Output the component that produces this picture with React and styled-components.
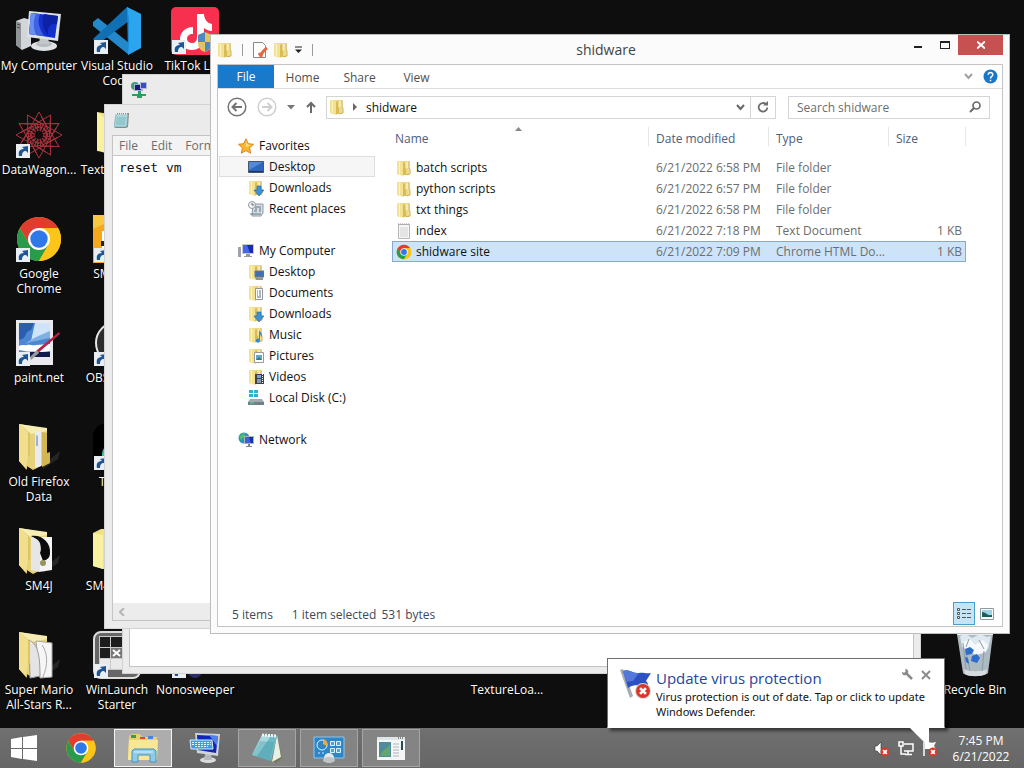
import React from 'react';
import styled, { createGlobalStyle } from 'styled-components';

const GlobalStyle = createGlobalStyle`
  * {
    box-sizing: border-box;
  }

  body {
    margin: 0;
    background: #0e0e0e;
    overflow: hidden;
  }

  body, button, input, textarea, table {
    font-family: "Open Sans", "Noto Sans", sans-serif;
    font-size: 12px;
    line-height: 15px;
  }

  button {
    border: 0;
    padding: 0;
    background: none;
    color: inherit;
  }

  svg {
    display: block;
    flex: none;
  }
`;

// Desktop
const Screen = styled.div`
  display: flex;
  flex-direction: column;
  height: 100vh;
  overflow: hidden;
`;

const Desktop = styled.main`
  position: relative;
  flex: 1;
  min-height: 0;
  background: #0e0e0e;
`;

const IconGrid = styled.div`
  display: grid;
  grid-auto-columns: 78px;
  grid-auto-rows: 104px;
`;

const Shortcut = styled.button`
  grid-column: ${(p) => p.$col};
  grid-row: ${(p) => p.$row};
  display: flex;
  flex-direction: column;
  align-items: center;
  gap: 3px;
  padding-top: 7px;
  color: #fff;
  font-size: 12px;
  text-shadow: 1px 1px 2px #000;

  svg {
    height: 48px;
  }

  span {
    width: 100%;
    white-space: pre;
    text-align: center;
  }
`;

// Windows
const WindowFrame = styled.section`
  position: absolute;
  display: flex;
  flex-direction: column;
  padding: 0 7px 7px;
  background: #ebebeb;
  border: 1px solid #d2d2d2;
`;

const SystemWindow = styled(WindowFrame)`
  top: 74px;
  left: 122px;
  right: 103px;
  bottom: 54px;
  padding: 0 6px 6px;
`;

const NotepadWindow = styled(WindowFrame)`
  top: 104px;
  left: 104px;
  right: 240px;
  bottom: 99px;
`;

const ExplorerWindow = styled(WindowFrame)`
  top: 34px;
  left: 210px;
  right: 14px;
  bottom: 94px;
  background: #fbfbfb;
  border-color: #bdbdbd;
  padding: 0 6px 6px;
`;

const PlainTitle = styled.header`
  display: flex;
  align-items: center;
  height: 30px;
  padding-left: 2px;
`;

const WindowBody = styled.div`
  display: flex;
  flex-direction: column;
  flex: 1;
  min-height: 0;
  background: #fff;
  border: 1px solid #c4c4c4;
`;

const MenuBar = styled.div`
  display: flex;
  align-items: center;
  height: 20px;
  padding-left: 6px;
  gap: 13px;
  background: #f3f3f3;
  border-bottom: 1px solid #c9c9c9;
  color: #6d6d6d;
`;

const Editor = styled.textarea`
  flex: 1;
  border: 0;
  outline: 0;
  resize: none;
  padding: 4px 6px;
  color: #111;
  font-family: "DejaVu Sans Mono", monospace;
  font-size: 13px;
  line-height: 16px;
`;

const HorizontalScroll = styled.div`
  display: flex;
  align-items: center;
  height: 17px;
  padding-left: 6px;
  background: #ececec;
`;

// Explorer title and ribbon
const TitleBar = styled.header`
  display: grid;
  grid-template-columns: 1fr auto 1fr;
  height: 29px;
  color: #444;
`;

const QuickAccess = styled.div`
  display: flex;
  align-items: center;
  gap: 5px;
`;

const Separator = styled.i`
  width: 1px;
  height: 12px;
  margin: 0 4px;
  background: #9a9a9a;
`;

const WindowTitle = styled.h1`
  margin: 0;
  padding-right: 8px;
  font-size: 14px;
  font-weight: 400;
  line-height: 30px;
`;

const Captions = styled.div`
  display: flex;
  justify-content: flex-end;
`;

const CaptionButton = styled.button`
  display: flex;
  align-items: center;
  justify-content: center;
  width: ${(p) => (p.$close ? '45px' : '27px')};
  height: 20px;
  background: ${(p) => (p.$close ? '#c75050' : 'transparent')};
`;

const Ribbon = styled.nav`
  display: flex;
  align-items: center;
  height: 24px;
  border-bottom: 1px solid #dcddde;
  color: #4f4f4f;
`;

const FileTab = styled.button`
  align-self: stretch;
  width: 56px;
  background: #1979ca;
  color: #fff;
`;

const RibbonTab = styled.button`
  width: 57px;
  height: 23px;
  padding-top: 2px;
`;

const RibbonEnd = styled.div`
  display: flex;
  align-items: center;
  gap: 10px;
  margin-left: auto;
  padding-right: 4px;
`;

// Address row
const AddressRow = styled.div`
  display: flex;
  align-items: center;
  height: 35px;
  padding: 1px 12px 0 9px;
`;

const HistoryButtons = styled.div`
  display: flex;
  align-items: center;
  gap: 10px;
  width: 99px;
`;

const AddressBox = styled.div`
  display: flex;
  align-items: center;
  flex: 1;
  height: 23px;
  border: 1px solid #d5d5d5;
  padding-left: 2px;
  color: #111;
`;

const Crumb = styled.button`
  padding: 0 7px;
`;

const AddressButton = styled.button`
  display: flex;
  align-items: center;
  justify-content: center;
  width: ${(p) => (p.$wide ? '25px' : '20px')};
  height: 21px;
  margin-left: ${(p) => (p.$wide ? '0' : 'auto')};
  border-left: ${(p) => (p.$wide ? '1px solid #d5d5d5' : '0')};
`;

const SearchBox = styled.label`
  display: flex;
  align-items: center;
  width: 202px;
  height: 23px;
  margin-left: 12px;
  padding: 0 8px;
  border: 1px solid #d5d5d5;

  input {
    flex: 1;
    min-width: 0;
    border: 0;
    outline: 0;
    padding: 0;
    background: none;
  }

  input::placeholder {
    color: #6d6d6d;
    opacity: 1;
  }
`;

// Tree and file list
const Panes = styled.div`
  display: flex;
  flex: 1;
  min-height: 0;
`;

const Tree = styled.nav`
  width: 157px;
  padding: 11px 0 0 1px;
`;

const TreeGroup = styled.ul`
  list-style: none;
  margin: 0 0 21px;
  padding: 0;
`;

const TreeItem = styled.button`
  display: flex;
  align-items: center;
  gap: 5px;
  width: 100%;
  height: 21px;
  padding-left: ${(p) => (p.$top ? '18px' : '28px')};
  color: #111;
  white-space: nowrap;
  border: 1px solid ${(p) => (p.$active ? '#dedede' : 'transparent')};
  background: ${(p) => (p.$active ? '#f6f6f6' : 'transparent')};
`;

const FilePane = styled.div`
  flex: 1;
  padding: 3px 36px 0 17px;
`;

const FileTable = styled.table`
  width: 100%;
  table-layout: fixed;
  border-collapse: collapse;
  color: #6d6d6d;

  th {
    height: 30px;
    padding: 0;
    text-align: left;
    vertical-align: top;
    font-weight: 400;
    color: #4c607a;
  }

  td {
    height: 21px;
    padding: 0 4px 0 7px;
    white-space: nowrap;
  }

  td:first-child {
    padding-left: 4px;
    color: #111;
  }

  td:last-child {
    text-align: right;
  }
`;

const HeaderCell = styled.div`
  position: relative;
  height: 19px;
  padding: ${(p) => (p.$first ? '4px 0 0 3px' : '4px 0 0 7px')};
  border-right: 1px solid #e6e6e6;

  svg {
    position: absolute;
    top: 0;
    left: 48%;
  }
`;

const FileRow = styled.tr`
  background: ${(p) => (p.$selected ? '#cde4f8' : 'transparent')};
  outline: ${(p) => (p.$selected ? '1px solid #86aacd' : '0')};
  outline-offset: -1px;
`;

const FileName = styled.div`
  display: flex;
  align-items: center;
  gap: 4px;
`;

const StatusBar = styled.footer`
  display: flex;
  align-items: center;
  height: 25px;
  padding: 0 8px 0 14px;
  gap: 5px;
  color: #3d4a5c;

  span {
    padding-top: 2px;
  }

  span:first-child {
    margin-right: 14px;
  }
`;

const ViewButton = styled.button`
  display: flex;
  align-items: center;
  justify-content: center;
  width: ${(p) => (p.$on ? '22px' : '14px')};
  height: 23px;
  margin-left: ${(p) => (p.$on ? 'auto' : '0')};
  background: ${(p) => (p.$on ? '#c3e5f5' : 'transparent')};
  border: ${(p) => (p.$on ? '1px solid #4aa0c8' : '0')};
`;

// Notification balloon
const Balloon = styled.aside`
  position: absolute;
  right: 79px;
  bottom: 0;
  z-index: 2;
  display: flex;
  gap: 4px;
  width: 338px;
  padding: 9px 10px 8px 12px;
  background: #fff;
  border: 1px solid #6f6f6f;
  border-bottom-color: #fff;
  box-shadow: 3px 3px 3px rgba(0, 0, 0, 0.5);

  &::after {
    content: '';
    position: absolute;
    top: 100%;
    right: 15px;
    width: 20px;
    height: 20px;
    background: #fff;
    clip-path: polygon(0 0, 100% 0, 100% 100%);
  }
`;

const BalloonText = styled.div`
  flex: 1;
  color: #111;

  h2 {
    margin: 0;
    color: #24459c;
    font-size: 15px;
    font-weight: 400;
    line-height: 21px;
  }

  p {
    margin: 0;
    font-family: "Noto Sans", "Open Sans", sans-serif;
    font-size: 11px;
    white-space: nowrap;
  }
`;

const BalloonTools = styled.div`
  position: absolute;
  top: 10px;
  right: 13px;
  display: flex;
  gap: 8px;
`;

// Taskbar
const TaskBar = styled.footer`
  display: flex;
  align-items: center;
  height: 40px;
  gap: 4px;
  background: linear-gradient(#707070, #666);
  color: #fff;
`;

const StartButton = styled.button`
  display: flex;
  align-items: center;
  justify-content: center;
  width: 48px;
  height: 40px;
`;

const Task = styled.button`
  display: flex;
  align-items: center;
  justify-content: center;
  width: 58px;
  height: 38px;
  border: 1px solid
    ${(p) => (p.$active ? '#f4f4f4' : p.$open ? '#a5a5a5' : 'transparent')};
  background: ${(p) => (p.$active ? '#adadad' : p.$open ? '#848484' : 'transparent')};
`;

const Tray = styled.div`
  display: flex;
  align-items: center;
  gap: 8px;
  margin-left: auto;
  padding-top: 2px;
`;

const Clock = styled.time`
  width: 70px;
  margin-right: 8px;
  text-align: center;
  line-height: 16px;
  white-space: pre;
`;

/* ---------- drawings ---------- */

const ChromeLogo = ({ size = 48 }) => (
  <svg width={size} height={size} viewBox="0 0 48 48">
    <circle cx="24" cy="24" r="22" fill="#fdc41a" />
    <path d="M24 13H43.05A22 22 0 0 0 4.95 13L14.47 29.5Z" fill="#e23c2f" />
    <path d="M14.47 29.5L4.95 13A22 22 0 0 0 24 46L33.53 29.5Z" fill="#2a9a4b" />
    <path d="M24 13H43.05A22 22 0 0 1 24 46L33.53 29.5Z" fill="#fdc41a" />
    <circle cx="24" cy="24" r="11" fill="#fff" />
    <circle cx="24" cy="24" r="8.7" fill="#2f78ea" />
  </svg>
);

const Badge = () => (
  <g>
    <path d="M1 33h14v14H1z" fill="#e9eef4" />
    <path d="M4 45c-1-5 1-7 5-7l-2-2 6-1v7l-2-2c-3 0-4 2-4 5z" fill="#1d5596" />
  </g>
);

const Big = ({ children, shortcut }) => (
  <svg width="48" height="48" viewBox="0 0 48 48">
    {children}
    {shortcut && <Badge />}
  </svg>
);

const BigComputer = () => (
  <Big>
    <path d="M1 14l8-3 7 2v26l-9 4-6-5z" fill="#d3d6d8" />
    <path d="M1 14l5 2v26l-5-4z" fill="#8f9597" />
    <path d="M2 17l3 1M2 20l3 1" stroke="#444" />
    <ellipse cx="29" cy="39" rx="13" ry="5" fill="#dfe3e5" />
    <ellipse cx="29" cy="37" rx="8" ry="3" fill="#b5bcc0" />
    <path d="M25 29h8l1 8h-10z" fill="#c1c7ca" />
    <path d="M14 4l32 3-3 27-31-4z" fill="#dfe2e3" />
    <path d="M16 6l27 3-3 22-26-4z" fill="#1130cc" />
    <path d="M16 6l9 1c-3 7-1 14 4 22l-15-2z" fill="#3f62e4" />
    <path d="M16 6l5 1c-3 7-3 13 0 21l-7-1z" fill="#6b8ff0" />
    <path d="M29 7l14 2-1 8c-6-1-10 2-9 12-5-7-7-15-4-22z" fill="#0c21a3" />
  </Big>
);

const VsCode = () => (
  <Big shortcut>
    <path d="M0 15l5-4 31 25v12L0 19z" fill="#2489ca" />
    <path d="M5 37L0 32 34 0l14 7-12 7z" fill="#1070b3" />
    <path d="M34 0l14 7v34l-13 7V13z" fill="#2aa5ee" />
    <path d="M34 0l1 48 1-12V13z" fill="#1b8ad8" />
  </Big>
);

const TikTok = () => (
  <Big shortcut>
    <rect width="48" height="48" rx="5" fill="#f8304f" />
    <path
      d="M33 7v23c0 9-6 13-12 13-7 0-12-5-12-11s5-12 13-12v7c-4 0-6 2-6 5 0 2 2 4 5 4 3 0 5-2 5-6V7zM33 8c1 5 3 8 8 9v7c-4 0-7-2-9-4z"
      fill="#fff"
    />
    <path d="M27 28l7-3 7 3v8c0 5-4 8-7 9-4-1-7-4-7-9z" fill="#e7c35b" />
    <path d="M34 25v10h-7v-7zM34 35h7c0 5-3 8-7 10z" fill="#4f89c4" />
  </Big>
);

const DataWagon = () => (
  <Big shortcut>
    <g fill="none" stroke="#a8323c">
      {[0, 30, 60, 90, 120, 150, 180, 210, 240, 270, 300, 330].map((a) => (
        <g key={a} transform={`rotate(${a} 24 24)`}>
          <path d="M24 1L15 17l9 6 9-6zM17 7l14 9" />
        </g>
      ))}
      <circle cx="24" cy="24" r="8" strokeDasharray="2 1" strokeWidth="2" />
    </g>
    <circle cx="24" cy="24" r="4" fill="#0e0e0e" />
  </Big>
);

const PaintNet = () => (
  <Big shortcut>
    <path d="M1 1h37v45H1z" fill="#e9e9ef" />
    <path d="M4 4h31v34H4z" fill="#4d87d2" />
    <path d="M20 4h15v12c-9 1-14 4-19 6z" fill="#cfe4f9" />
    <path d="M4 4h15l-3 7-4 2-3 6-5 2z" fill="#2a5cb0" />
    <path d="M35 12v7c-9 2-18 3-25 6 6-5 13-8 25-13z" fill="#7fb0e4" />
    <path d="M4 27c3-2 6 0 8-1s6 1 9 0l14-1v7l-15 2-16-3z" fill="#fff" />
    <path d="M4 34c10-2 20-1 31-1v5H4z" fill="#101c4d" />
    <path d="M44 13L22 31l-3 5 4-2 22-19z" fill="#b32446" />
    <path d="M22 31l2 3-8 7-1-3z" fill="#9a9a9a" />
  </Big>
);

const BigFolder = ({ kind }) => (
  <Big>
    <path d="M28 42l17-14-2 8-15 10z" fill="#252525" />
    <path d="M4 1l28 5v34l-14 7L4 38z" fill="#e5d37c" />
    <path d="M4 1l28 4v3l-16 3z" fill="#f6edb4" />
    {kind === 'plain' && (
      <>
        <path d="M20 8l6 1v34l-6 2z" fill="#e9ebf3" />
        <path d="M21 12l2 1v10h-2z" fill="#9fb0dc" />
        <path d="M27 9l5 1v20l3-1v11l-8 4z" fill="#d2b652" />
      </>
    )}
    {kind === 'penguin' && (
      <>
        <path d="M20 10h17v33l-13 2z" fill="#f4f4f4" />
        <path d="M16 9c10-2 20 6 19 17 0 5-3 7-7 8l-3-8c3-6-3-14-9-17z" fill="#0b0b0b" />
        <circle cx="28" cy="36" r="3" fill="#989460" />
        <path d="M16 10c8 1 11 7 9 14v21l-9-2z" fill="#e6e6e6" />
      </>
    )}
    {kind === 'papers' && (
      <>
        <path d="M21 10l16 2v34l-12 1z" fill="#f6f6f6" stroke="#a9a9a9" />
        <path d="M27 14c6 8 6 20 1 32" stroke="#aaa" fill="none" />
        <path d="M14 9c8 4 11 12 11 36l-10 2z" fill="#e4e4e4" stroke="#999" />
      </>
    )}
    <path d="M4 1l11 9v23l-3 1v13L4 38z" fill="#ddc565" />
    <path d="M4 1l9 8v24l-2 13-7-8z" fill="#f1df8e" />
  </Big>
);

const YellowBox = ({ round }) => (
  <Big>
    <path d={round ? 'M0 6l8-4h36v38l-34 2L0 39z' : 'M4 1l30 5v38L4 40z'} fill="#eee37c" />
    <path d={round ? 'M0 6l10 2v34L0 39z' : 'M4 1l8 6v35l-8-3z'} fill="#f7f1a0" />
  </Big>
);

const OrangeApp = () => (
  <Big shortcut>
    <path d="M0 0h48v48H0z" fill="#f6a81c" />
    <path d="M0 0h30L0 14z" fill="#f9c843" />
    <path d="M9 16h30v30H9z" fill="#fff" />
    <path d="M8 26h3v5H8z" fill="#222" />
  </Big>
);

const Obs = () => (
  <Big shortcut>
    <circle cx="24" cy="24" r="21" fill="#2d2d30" stroke="#e6e6e6" strokeWidth="2" />
  </Big>
);

const BlackApp = () => (
  <Big shortcut>
    <rect width="48" height="48" rx="14" fill="#000" />
    <path d="M9 32c0-6 3-9 8-10v14H9z" fill="#36c9a8" />
  </Big>
);

const WinLaunch = () => (
  <Big shortcut>
    <rect x="1" y="1" width="46" height="46" rx="7" fill="#666" stroke="#ddd" strokeWidth="2" />
    <rect x="6" y="5" width="36" height="34" fill="#c9c9c9" />
    <path d="M7 6h10v10H7zM18 6h11v10H18zM30 6h11v10H30zM7 17h10v10H7zM30 17h11v10H30z" fill="#1d1d1d" />
    <path d="M7 28h10v10H7zM18 28h11v10H18zM30 28h11v10H30z" fill="#e9e9e9" />
    <path d="M18 17h11v10H18z" fill="#777" />
    <path d="M20 19l7 6m0-6l-7 6" stroke="#fff" strokeWidth="2" />
  </Big>
);

const Nonosweeper = () => (
  <Big shortcut>
    <circle cx="24" cy="40" r="7" fill="#2b2d6b" />
  </Big>
);

const RecycleBin = () => (
  <Big>
    <path d="M6 3h36l-5 39c-4 4-22 4-25 0z" fill="#aebac2" />
    <path d="M9 5l6-2 6 4 8-4 7 3 4-1-3 13-6 4-12-2-8-4z" fill="#dfe8ee" />
    <path d="M11 12l8-4 5 6 8-5 5 5-2 7-9 3-11-4z" fill="#f5f9fb" />
    <path d="M15 21l4 19M33 20l-2 21M12 12l3 27M28 9l5 9M18 8l-3 8" stroke="#8b9ba6" />
    <path d="M14 18l5-2 4 3-2 4-6 1zM21 25l5-2 3 4-3 5-6-2zM14 26l3 1 1 6-3-2z" fill="#2f6dcb" />
    <path d="M13 38c5 3 19 3 23 0l-1 5c-5 3-17 3-21 0z" fill="#d5dce0" />
    <path d="M6 3h36" stroke="#e6ecf0" strokeWidth="2" />
  </Big>
);

const Small = ({ children }) => (
  <svg width="16" height="16" viewBox="0 0 16 16">
    {children}
  </svg>
);

const FolderShape = () => (
  <>
    <path d="M1 1.500l5-.5h7.500v13L6 15.500 1 14z" fill="#ecd98a" />
    <path d="M1 1.500h5l1 2v12L1 14z" fill="#f3e292" />
    <path d="M3.500 2v12.500" stroke="#fbf3bf" />
    <path d="M7 3l2-1v6l1 1v5.500L7 15.500z" fill="#d9bb55" />
    <path d="M10 2h3v6h-3z" fill="#f5eab4" />
    <path d="M13 1.500V8l1 1v5l-4 .8" fill="none" stroke="#cdae4b" />
  </>
);

const Folder = ({ mark }) => (
  <Small>
    <FolderShape />
    {mark === 'down' && <path d="M9 6h4v4h3l-5 6-5-6h3z" fill="#3b93da" stroke="#1d64a6" strokeWidth=".6" />}
    {mark === 'desktop' && (
      <>
        <path d="M7 7h9v6H7z" fill="#3d70b5" stroke="#6d7887" />
        <path d="M8 14h7v2H8z" fill="#8994a0" />
      </>
    )}
    {mark === 'doc' && (
      <>
        <path d="M7.500 3.500h7v11h-7z" fill="#fff" stroke="#949494" />
        <path d="M9 6h1m1 0h2M9 8h1m1 0h2M9 10h1m1 0h2M9 12h4" stroke="#5c6b7d" />
      </>
    )}
    {mark === 'music' && (
      <path d="M11 2c0 3 4 4 3 8-1-2-2-2-2-3v6c0 4-5 3-4 0 0-1 2-2 3-1z" fill="#2d8cd8" />
    )}
    {mark === 'picture' && (
      <>
        <path d="M6.500 4.500h9v10h-9z" fill="#fff" stroke="#9b9b9b" />
        <path d="M8 7h6v5H8z" fill="#5fa8d6" />
        <path d="M8 12l3-3 3 3z" fill="#3c7c68" />
      </>
    )}
    {mark === 'video' && (
      <>
        <path d="M7 5h9v10H7z" fill="#39424e" />
        <path d="M9 6h4v3H9z" fill="#7aa4cf" />
        <path d="M9 10h4v4H9z" fill="#8a98ac" />
        <path d="M14.500 5v10" stroke="#fff" strokeDasharray="1 1" />
      </>
    )}
  </Small>
);

const Star = () => (
  <Small>
    <path d="M8 .8l2.200 4.900 5.300.6-3.900 3.600 1 5.300L8 12.600l-4.600 2.600 1-5.300L.5 6.300l5.300-.6z" fill="#fbb62e" stroke="#dc8320" />
    <path d="M8 3l1.500 3.500 3.500.5-5 2z" fill="#ffe38a" />
  </Small>
);

const DesktopIcon = () => (
  <Small>
    <path d="M.5 2.500h15v11H.5z" fill="#2e65bd" stroke="#45566e" />
    <path d="M1 3h14L1 11z" fill="#5389d8" />
    <path d="M1 12h14v1H1z" fill="#1f3458" />
  </Small>
);

const RecentIcon = () => (
  <Small>
    <path d="M5 3h10v9l-2 3H4z" fill="#d7dee3" stroke="#8a9aa5" />
    <path d="M7 6h6M7 8h2m2 0h2M6 10h3m2 0h2M2 13h11" stroke="#5f7888" />
    <circle cx="4" cy="4" r="3.500" fill="#f1f4f6" stroke="#90999f" />
    <path d="M4 2v2h2" fill="none" stroke="#666" />
  </Small>
);

const ComputerIcon = () => (
  <Small>
    <path d="M0 4h3v10H0z" fill="#9da3a8" />
    <path d="M4 1h12v10H4z" fill="#c5c9ce" />
    <path d="M5 2h10v8H5z" fill="#1c2da8" />
    <path d="M5 2h4l3 8H5z" fill="#4569df" />
    <path d="M8 11h4v2h2v1H6v-1h2z" fill="#949ba1" />
  </Small>
);

const DiskIcon = () => (
  <Small>
    <path d="M1 0h4v3H1zM6 0h4v3H6zM1 4h4v3H1zM6 4h4v3H6z" fill="#29b2d3" />
    <path d="M2 9h12l2 3v3H0v-3z" fill="#9fabae" />
    <path d="M0 12h16v3H0z" fill="#6f8184" />
    <path d="M2 13h4" stroke="#62d69b" />
  </Small>
);

const NetworkIcon = () => (
  <Small>
    <circle cx="6" cy="6" r="5.500" fill="#2a94ba" />
    <path d="M1 4c3 0 3-3 6-3l-1 4-3 3z" fill="#56b975" />
    <path d="M6 4h10v8H6z" fill="#aab4be" />
    <path d="M7 5h8v6H7z" fill="#1931ad" />
    <path d="M7 5h4l2 6H7z" fill="#3a62dc" />
    <path d="M10 12h2v2h2v1H8v-1h2z" fill="#7d868e" />
  </Small>
);

const RemoteIcon = () => (
  <Small>
    <circle cx="4" cy="4" r="4" fill="#3a9d77" />
    <path d="M3 2h9v7H3z" fill="#a5b0cc" />
    <path d="M4 3h6v5H4z" fill="#101f7a" />
    <path d="M9 0h7v7H9z" fill="#b0b7dc" />
    <path d="M10 1h5v5h-5z" fill="#3a4cc0" />
    <path d="M7 9h3v3h5v2h-4v2H6v-2H1v-2h6z" fill="#2c9c62" />
  </Small>
);

const NotepadIcon = ({ size = 16 }) => (
  <svg width={size} height={size} viewBox="0 0 32 32">
    <path d="M26 4l5 22-6 5-4-2z" fill="#6f7040" opacity=".7" />
    <path d="M26 3l4 22-9 5z" fill="#e6f0e4" />
    <path d="M11 3l15 1-6 25L1 23z" fill="#6fbac6" />
    <path d="M11 3l9 1L6 24l-5-1z" fill="#a9d9df" />
    <path d="M9 9l14 1-4 19L1 23z" fill="#3f98a8" opacity=".35" />
    <path d="M11 3l15 1" stroke="#f2f2f2" strokeWidth="3" strokeDasharray="2 1" />
  </svg>
);

const SmallNotepadIcon = () => (
  <Small>
    <path d="M3 1h12l-1 14-2 1H1z" fill="#90877a" />
    <path d="M2 2h12l-1 12-1 1H0z" fill="#a9d6db" stroke="#6f9da3" strokeWidth=".6" />
    <path d="M3 6h9M2.500 8h9M2 10h9M2 12h9" stroke="#7fb9c0" />
    <path d="M2 1.500h12" stroke="#f0f0f0" strokeWidth="2" strokeDasharray="1 1" />
  </Small>
);

const TextIcon = () => (
  <Small>
    <path d="M2.500 1.500h11v14h-11z" fill="#f6f6f6" stroke="#b5b5b5" />
    <path d="M2 1h12" stroke="#999" strokeDasharray="1 1" />
    <path d="M4 5h8M4 7h8M4 9h8M4 11h8M4 13h8" stroke="#cfd2d5" />
  </Small>
);

const PropertiesIcon = () => (
  <Small>
    <path d="M1.500.5h9l3 3v12h-12z" fill="#fff" stroke="#888" />
    <path d="M7 11l2 3c1-4 3-6 6-8" fill="none" stroke="#e3683c" strokeWidth="3" />
  </Small>
);

const Chevron = ({ color = '#666' }) => (
  <svg width="9" height="7" viewBox="0 0 9 7">
    <path d="M1 1l3.500 4L8 1" fill="none" stroke={color} strokeWidth="2" />
  </svg>
);

const ArrowCircle = ({ right }) => (
  <svg width="20" height="20" viewBox="0 0 20 20">
    <g
      fill="none"
      stroke={right ? '#cfcfcf' : '#747474'}
      transform={right ? 'rotate(180 10 10)' : undefined}
    >
      <circle cx="10" cy="10" r="8.800" strokeWidth="1.500" />
      <path d="M15 10H6M9.500 6L5.500 10l4 4" strokeWidth="2" />
    </g>
  </svg>
);

const Monitor = () => (
  <svg width="32" height="32" viewBox="0 0 32 32">
    <ellipse cx="19" cy="28" rx="8" ry="3" fill="#d8dcdd" />
    <path d="M16 22h6l1 6h-8z" fill="#b4babd" />
    <path d="M6 1l25 1-2 22-21-3z" fill="#ced4d8" />
    <path d="M8 3l21 1-2 17-18-3z" fill="#1425b5" />
    <path d="M20 3l9 1-1 10z" fill="#5480e8" />
    <path d="M1 8h22l1 9H2z" fill="#3ba0e2" stroke="#d7effc" />
    <path d="M3 10.500h19M3 12.500h19M6 14.500h13" stroke="#e4f4fd" strokeDasharray="2 1" />
  </svg>
);

const ExplorerTaskIcon = () => (
  <svg width="32" height="32" viewBox="0 0 32 32">
    <path d="M2 4l3-2h8l2 3h15v23H1z" fill="#e8d06c" />
    <path d="M4 3h5v3H4z" fill="#3d9852" />
    <path d="M13 5h5v2h-5z" fill="#d94c36" />
    <path d="M21 4h5v3h-5z" fill="#4488cf" />
    <path d="M2 8h29l-1 20H1z" fill="#f8e796" />
    <path d="M5 30V19l2-2h20l2 2v11h-6v-7H11v7z" fill="#8fcbe9" stroke="#4492b8" />
    <path d="M7 20h19" stroke="#dff4fd" />
  </svg>
);

const ControlTaskIcon = () => (
  <svg width="32" height="32" viewBox="0 0 32 32">
    <path d="M1 5h30v21H1z" fill="#2d86c7" stroke="#8fc5e8" />
    <circle cx="9" cy="13" r="5" fill="none" stroke="#e5f3fb" />
    <path d="M10 12V7a5 5 0 0 1 4 7z" fill="#f3a83c" />
    <path d="M17.500 9.500h4v4h-4zM23.500 9.500h4v4h-4zM17.500 16.500h4v4h-4zM23.500 16.500h4v4h-4z" fill="#4aa4df" stroke="#e2f2fb" />
    <path d="M5 21h7" stroke="#d5ebf8" strokeDasharray="2 2" />
    <circle cx="16" cy="26" r="5" fill="#e5e7e8" />
    <ellipse cx="16" cy="28" rx="6" ry="3" fill="#bfc4c7" />
  </svg>
);

const PanelTaskIcon = () => (
  <svg width="32" height="32" viewBox="0 0 32 32">
    <path d="M2 5h28v23H2z" fill="#f5f6f6" />
    <path d="M2 5h28v3H2z" fill="#dfe4e6" />
    <path d="M23 6h1m1 0h1m1 0h1" stroke="#333" />
    <path d="M4 10h12v15H4z" fill="#4e8b9b" />
    <path d="M5 24c2-8 8-6 10-13v13z" fill="#65a56e" />
    <path d="M18 12h6M18 15h6M18 18h6M18 21h6M18 24h6" stroke="#aeb4b8" />
    <path d="M26 9h2v9h-2z" fill="#244c61" />
  </svg>
);

const WindowsLogo = () => (
  <svg width="26" height="26" viewBox="0 0 26 26">
    <path d="M0 4l11-2v11H0zM12 2l14-2v13H12zM0 14h11v10L0 22zM12 14h14v12l-14-2z" fill="#fff" />
  </svg>
);

const RedCross = ({ x, y, r }) => (
  <g transform={`translate(${x} ${y})`}>
    <circle r={r} fill="#d6392c" />
    <path
      d={`M${-r / 2.4} ${-r / 2.4}L${r / 2.4} ${r / 2.4}M${r / 2.4} ${-r / 2.4}L${-r / 2.4} ${r / 2.4}`}
      stroke="#fff"
      strokeWidth={r / 2.6}
    />
  </g>
);

const FlagIcon = () => (
  <svg width="32" height="32" viewBox="0 0 32 32">
    <path d="M0 2l3-1 10 27-3 2z" fill="#a7abb3" />
    <path d="M3 3c6-3 10 3 16 2 4-1 7 1 12 0l-5 8c2 2 2 3 2 4-8 2-12-2-20 3z" fill="#2c51c4" />
    <path d="M3 3c6-3 10 3 16 2l-6 8-7 1z" fill="#5278dc" />
    <circle cx="23" cy="23" r="8" fill="#d9d5d5" />
    <RedCross x={23} y={23} r={7} />
  </svg>
);

const shortcuts = [
  { col: 1, row: 1, label: 'My Computer', icon: <BigComputer /> },
  { col: 1, row: 2, label: 'DataWagon...', icon: <DataWagon /> },
  { col: 1, row: 3, label: 'Google\nChrome', icon: <Big shortcut><ChromeLogo /></Big> },
  { col: 1, row: 4, label: 'paint.net', icon: <PaintNet /> },
  { col: 1, row: 5, label: 'Old Firefox\nData', icon: <BigFolder kind="plain" /> },
  { col: 1, row: 6, label: 'SM4J', icon: <BigFolder kind="penguin" /> },
  { col: 1, row: 7, label: 'Super Mario\nAll-Stars R...', icon: <BigFolder kind="papers" /> },
  { col: 2, row: 1, label: 'Visual Studio\nCode', icon: <VsCode /> },
  { col: 2, row: 2, label: 'TextureLoa...', icon: <YellowBox /> },
  { col: 2, row: 3, label: 'SM4J 2.0', icon: <OrangeApp /> },
  { col: 2, row: 4, label: 'OBS Studio', icon: <Obs /> },
  { col: 2, row: 5, label: 'TikTok', icon: <BlackApp /> },
  { col: 2, row: 6, label: 'SM4J Saves', icon: <YellowBox round /> },
  { col: 2, row: 7, label: 'WinLaunch\nStarter', icon: <WinLaunch /> },
  { col: 3, row: 1, label: 'TikTok Live', icon: <TikTok /> },
  { col: 3, row: 7, label: 'Nonosweeper', icon: <Nonosweeper /> },
  { col: 7, row: 7, label: 'TextureLoa...', icon: <Big /> },
  { col: 13, row: 7, label: 'Recycle Bin', icon: <RecycleBin /> },
];

const tree = [
  [
    { label: 'Favorites', icon: <Star />, top: true },
    { label: 'Desktop', icon: <DesktopIcon />, active: true },
    { label: 'Downloads', icon: <Folder mark="down" /> },
    { label: 'Recent places', icon: <RecentIcon /> },
  ],
  [
    { label: 'My Computer', icon: <ComputerIcon />, top: true },
    { label: 'Desktop', icon: <Folder mark="desktop" /> },
    { label: 'Documents', icon: <Folder mark="doc" /> },
    { label: 'Downloads', icon: <Folder mark="down" /> },
    { label: 'Music', icon: <Folder mark="music" /> },
    { label: 'Pictures', icon: <Folder mark="picture" /> },
    { label: 'Videos', icon: <Folder mark="video" /> },
    { label: 'Local Disk (C:)', icon: <DiskIcon /> },
  ],
  [{ label: 'Network', icon: <NetworkIcon />, top: true }],
];

const files = [
  { name: 'batch scripts', date: '6/21/2022 6:58 PM', type: 'File folder', size: '', icon: <Folder /> },
  { name: 'python scripts', date: '6/21/2022 6:57 PM', type: 'File folder', size: '', icon: <Folder /> },
  { name: 'txt things', date: '6/21/2022 6:58 PM', type: 'File folder', size: '', icon: <Folder /> },
  { name: 'index', date: '6/21/2022 7:18 PM', type: 'Text Document', size: '1 KB', icon: <TextIcon /> },
  {
    name: 'shidware site',
    date: '6/21/2022 7:09 PM',
    type: 'Chrome HTML Do...',
    size: '1 KB',
    icon: <ChromeLogo size={16} />,
    selected: true,
  },
];

const Explorer = () => (
  <ExplorerWindow>
    <TitleBar>
      <QuickAccess>
        <Folder />
        <Separator />
        <PropertiesIcon />
        <Folder />
        <svg width="9" height="8" viewBox="0 0 9 8">
          <path d="M1 1h7" stroke="#222" />
          <path d="M1 3.500h7L4.500 7z" fill="#222" />
        </svg>
        <Separator />
      </QuickAccess>
      <WindowTitle>shidware</WindowTitle>
      <Captions>
        <CaptionButton aria-label="Minimize">
          <svg width="8" height="8"><path d="M0 5h8v2H0z" fill="#222" /></svg>
        </CaptionButton>
        <CaptionButton aria-label="Maximize">
          <svg width="10" height="8"><path d="M0 0h10v8H0zM1 2v5h8V2z" fill="#222" fillRule="evenodd" /></svg>
        </CaptionButton>
        <CaptionButton $close aria-label="Close">
          <svg width="8" height="8"><path d="M0 .5l8 7M8 .5l-8 7" stroke="#fff" strokeWidth="2" /></svg>
        </CaptionButton>
      </Captions>
    </TitleBar>
    <WindowBody>
      <Ribbon>
        <FileTab>File</FileTab>
        <RibbonTab>Home</RibbonTab>
        <RibbonTab>Share</RibbonTab>
        <RibbonTab>View</RibbonTab>
        <RibbonEnd>
          <Chevron color="#a0a0a0" />
          <svg width="15" height="15" viewBox="0 0 15 15">
            <circle cx="7.500" cy="7.500" r="7" fill="#1877c9" />
            <path d="M5.200 5.800c0-3 4.800-3 4.600 0 0 1.600-2.300 1.600-2.300 3.700M7.500 10.800v1.500" fill="none" stroke="#fff" strokeWidth="1.500" />
          </svg>
        </RibbonEnd>
      </Ribbon>
      <AddressRow>
        <HistoryButtons>
          <ArrowCircle />
          <ArrowCircle right />
          <svg width="8" height="5"><path d="M0 0h8L4 4.500z" fill="#777" /></svg>
          <svg width="12" height="12"><path d="M6 12V2M2 6l4-4 4 4" fill="none" stroke="#6a6a6a" strokeWidth="2" /></svg>
        </HistoryButtons>
        <AddressBox>
          <Folder />
          <svg width="14" height="8"><path d="M8 0l4 4-4 4z" fill="#666" /></svg>
          <Crumb>shidware</Crumb>
          <AddressButton aria-label="Previous locations"><Chevron /></AddressButton>
          <AddressButton $wide aria-label="Refresh">
            <svg width="12" height="12" viewBox="0 0 12 12">
              <path d="M9 3.200A4.300 4.300 0 1 0 10.300 6.500" fill="none" stroke="#6e6e6e" strokeWidth="1.800" />
              <path d="M6 4.500h5V0z" fill="#6e6e6e" />
            </svg>
          </AddressButton>
        </AddressBox>
        <SearchBox>
          <input type="text" placeholder="Search shidware" aria-label="Search shidware" />
          <svg width="12" height="12" viewBox="0 0 12 12">
            <circle cx="7.500" cy="4.500" r="3.500" fill="none" stroke="#6a6a6a" strokeWidth="1.700" />
            <path d="M5 7L1 11" stroke="#6a6a6a" strokeWidth="2" />
          </svg>
        </SearchBox>
      </AddressRow>
      <Panes>
        <Tree>
          {tree.map((group, i) => (
            <TreeGroup key={i}>
              {group.map((item) => (
                <li key={item.label}>
                  <TreeItem $top={item.top} $active={item.active}>
                    {item.icon}
                    {item.label}
                  </TreeItem>
                </li>
              ))}
            </TreeGroup>
          ))}
        </Tree>
        <FilePane>
          <FileTable>
            <colgroup>
              <col />
              <col width="120" />
              <col width="120" />
              <col width="77" />
            </colgroup>
            <thead>
              <tr>
                <th>
                  <HeaderCell $first>
                    Name
                    <svg width="7" height="4"><path d="M0 4l3.500-4L7 4z" fill="#888" /></svg>
                  </HeaderCell>
                </th>
                <th><HeaderCell>Date modified</HeaderCell></th>
                <th><HeaderCell>Type</HeaderCell></th>
                <th><HeaderCell>Size</HeaderCell></th>
              </tr>
            </thead>
            <tbody>
              {files.map((f) => (
                <FileRow key={f.name} $selected={f.selected}>
                  <td><FileName>{f.icon}{f.name}</FileName></td>
                  <td>{f.date}</td>
                  <td>{f.type}</td>
                  <td>{f.size}</td>
                </FileRow>
              ))}
            </tbody>
          </FileTable>
        </FilePane>
      </Panes>
      <StatusBar>
        <span>5 items</span>
        <span>1 item selected</span>
        <span>531 bytes</span>
        <ViewButton $on aria-label="Details view">
          <svg width="16" height="13">
            <path d="M1.500 1.500h2v2h-2zM1.500 5.500h2v2h-2zM1.500 9.500h2v2h-2z" fill="#fff" stroke="#555" />
            <path d="M6 2.500h4m1 0h4M6 6.500h4m1 0h4M6 10.500h4m1 0h4" stroke="#555" />
          </svg>
        </ViewButton>
        <ViewButton aria-label="Large thumbnails">
          <svg width="14" height="12">
            <path d="M.5.500h13v11H.5z" fill="#fff" stroke="#8c9aa2" />
            <path d="M2 2h10v7H2z" fill="#9ed2e4" />
            <path d="M2 4c4 0 5 4 10 3v2H2z" fill="#1d5d5a" />
          </svg>
        </ViewButton>
      </StatusBar>
    </WindowBody>
  </ExplorerWindow>
);

const App = () => {
  return (
    <Screen>
      <GlobalStyle />
      <Desktop>
        <IconGrid>
          {shortcuts.map((s) => (
            <Shortcut key={`${s.col}-${s.row}`} $col={s.col} $row={s.row}>
              {s.icon}
              <span>{s.label}</span>
            </Shortcut>
          ))}
        </IconGrid>

        <SystemWindow>
          <PlainTitle><RemoteIcon /></PlainTitle>
          <WindowBody />
        </SystemWindow>

        <NotepadWindow>
          <PlainTitle><SmallNotepadIcon /></PlainTitle>
          <WindowBody>
            <MenuBar>
              <button>File</button>
              <button>Edit</button>
              <button>Format</button>
            </MenuBar>
            <Editor defaultValue="reset vm" aria-label="Note text" spellCheck={false} />
            <HorizontalScroll>
              <svg width="6" height="8"><path d="M5 0L1 4l4 4" fill="none" stroke="#b5b5b5" strokeWidth="2" /></svg>
            </HorizontalScroll>
          </WindowBody>
        </NotepadWindow>

        <Explorer />

        <Balloon>
          <FlagIcon />
          <BalloonText>
            <h2>Update virus protection</h2>
            <p>
              Virus protection is out of date. Tap or click to update
              <br />
              Windows Defender.
            </p>
          </BalloonText>
          <BalloonTools>
            <button aria-label="Options">
              <svg width="11" height="11" viewBox="0 0 11 11">
                <path d="M3 3l7 7" stroke="#8b8b8b" strokeWidth="2.500" />
                <path d="M3 0l1 3-1 1-3-1c0 2 1 4 4 3l2-2c1-3-1-4-3-4z" fill="#8b8b8b" />
              </svg>
            </button>
            <button aria-label="Dismiss">
              <svg width="10" height="10"><path d="M1 1l8 8M9 1L1 9" stroke="#8b8b8b" strokeWidth="2" /></svg>
            </button>
          </BalloonTools>
        </Balloon>
      </Desktop>

      <TaskBar>
        <StartButton aria-label="Start"><WindowsLogo /></StartButton>
        <Task aria-label="Chrome"><ChromeLogo size={32} /></Task>
        <Task $active $open aria-label="File Explorer"><ExplorerTaskIcon /></Task>
        <Task aria-label="On-screen keyboard"><Monitor /></Task>
        <Task $open aria-label="Notepad"><NotepadIcon size={32} /></Task>
        <Task $open aria-label="Control Panel"><ControlTaskIcon /></Task>
        <Task $open aria-label="System"><PanelTaskIcon /></Task>
        <Tray>
          <svg width="16" height="16" viewBox="0 0 16 16">
            <path d="M1 5h2l4-4v13l-4-4H1z" fill="#fff" stroke="#333" strokeWidth=".6" />
            <RedCross x={11} y={11} r={4.5} />
          </svg>
          <svg width="16" height="16" viewBox="0 0 16 16">
            <path d="M6 3h9v7H6M1 1h4v4H1zM3 5v8h5M10 10v3M7 13.500h7" fill="none" stroke="#fff" strokeWidth="1.500" />
          </svg>
          <svg width="16" height="16" viewBox="0 0 16 16">
            <path d="M2 1v14" stroke="#fff" strokeWidth="1.500" />
            <path d="M3 1c4-1 5 2 11 0l-2 4 2 3H3z" fill="#fff" />
            <RedCross x={11} y={11} r={4.5} />
          </svg>
          <Clock>{'7:45 PM\n6/21/2022'}</Clock>
        </Tray>
      </TaskBar>
    </Screen>
  );
};

export default App;
